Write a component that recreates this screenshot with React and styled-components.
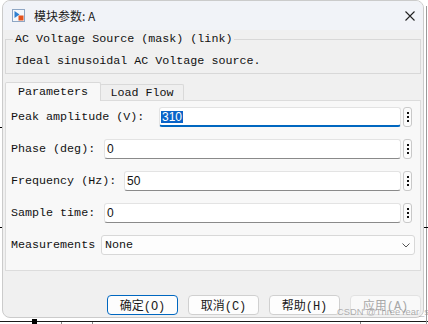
import React from "react";
import styled, { createGlobalStyle } from "styled-components";

const Global = createGlobalStyle`
  html, body { margin: 0; padding: 0; background: #ffffff; }
  body { width: 428px; height: 324px; overflow: hidden; }
`;

const Stage = styled.div`
  position: relative;
  width: 428px;
  height: 324px;
`;

const Canvas = styled.svg`
  position: absolute;
  left: 0;
  top: 0;
`;

const Window = styled.div`
  position: relative;
  margin-left: 2px;
  width: 422px;
  height: 318px;
  box-sizing: border-box;
  border: 1px solid #cbcbcb;
  border-radius: 8px;
  background: #f0f0f0;
  overflow: hidden;
  display: flex;
  flex-direction: column;
  font-family: "Liberation Mono", "Noto Sans CJK SC", monospace;
  font-size: 11.7px;
  color: #111;
`;

const TitleBar = styled.div`
  height: 29px;
  flex-shrink: 0;
  background: #f1f3f8;
  display: flex;
  align-items: center;
  padding: 0 8px 0 9px;
`;

const Title = styled.span`
  margin-left: 9px;
  font-family: "Noto Sans CJK SC", "Noto Sans", sans-serif;
  font-size: 12px;
  color: #1a1a1a;
`;

const Close = styled.svg`
  margin-left: auto;
`;

const Body = styled.div`
  padding: 0 2px;
  display: flex;
  flex-direction: column;
`;

const Group = styled.fieldset`
  margin: 2px 0 0;
  padding: 8px 7px 5px;
  border: 1px solid #d8d8d8;
  min-width: 0;
`;

const Legend = styled.legend`
  padding: 0 2px;
  line-height: 14px;
`;

const Desc = styled.div`
  padding-left: 2px;
  line-height: 14px;
`;

const TabBar = styled.div`
  display: flex;
  align-items: flex-end;
  margin-top: 8px;
  height: 18px;
`;

const Tab = styled.div`
  position: relative;
  z-index: 1;
  box-sizing: border-box;
  width: ${(p) => p.$w}px;
  height: ${(p) => (p.$active ? 19 : 16)}px;
  margin-bottom: ${(p) => (p.$active ? -1 : 0)}px;
  border: 1px solid #d9d9d9;
  border-bottom: none;
  border-radius: 2px 2px 0 0;
  background: ${(p) => (p.$active ? "#f8f8f8" : "#efefef")};
  display: flex;
  align-items: center;
  justify-content: center;
  margin-left: ${(p) => (p.$active ? 0 : -1)}px;
`;

const Panel = styled.div`
  height: 171px;
  box-sizing: border-box;
  border: 1px solid #dcdcdc;
  background: #f8f8f8;
  padding: 6px 5px 0 5px;
  display: flex;
  flex-direction: column;
  gap: 12px;
`;

const Row = styled.div`
  display: flex;
  align-items: center;
  height: 20px;
`;

const Label = styled.span`
  width: ${(p) => p.$w}px;
  flex-shrink: 0;
  white-space: nowrap;
`;

const Input = styled.div`
  flex: 1;
  height: 20px;
  box-sizing: border-box;
  background: #ffffff;
  border: 1px solid #e3e3e3;
  border-bottom: ${(p) => (p.$focus ? "2px solid #0067c0" : "1px solid #8a8a8a")};
  border-radius: 3px;
  padding-left: ${(p) => (p.$focus ? 1 : 2)}px;
  display: flex;
  align-items: center;
  font-family: "Liberation Sans", sans-serif;
  font-size: 12px;
  color: #111;
`;

const Selected = styled.span`
  background: #0a64c8;
  color: #fff;
  line-height: 12px;
  padding: 0 1px;
`;

const Dots = styled.div`
  width: 9px;
  height: 20px;
  box-sizing: border-box;
  margin: 0 3px 0 2px;
  border: 1px solid #c9c9c9;
  border-radius: 3px;
  background: #fbfbfb;
  display: flex;
  flex-direction: column;
  align-items: center;
  justify-content: center;
  gap: 2px;
`;

const Dot = styled.i`
  display: block;
  width: 2px;
  height: 2px;
  background: #111;
`;

const Select = styled.div`
  flex: 1;
  height: 20px;
  box-sizing: border-box;
  border: 1px solid #d8d8d8;
  border-radius: 3px;
  background: #fdfdfd;
  padding: 0 4px 0 3px;
  display: flex;
  align-items: center;
  justify-content: space-between;
`;

const ButtonRow = styled.div`
  display: flex;
  justify-content: flex-end;
  gap: 10px;
  margin-top: 24px;
`;

const Button = styled.div`
  width: 71px;
  height: 20px;
  box-sizing: border-box;
  border: 1px solid ${(p) => (p.$primary ? "#0067c0" : p.$disabled ? "#e2e2e2" : "#d0d0d0")};
  border-radius: 4px;
  background: ${(p) => (p.$disabled ? "#f9f9f9" : "#fdfdfd")};
  color: ${(p) => (p.$disabled ? "#a8a8a8" : "#1a1a1a")};
  display: flex;
  align-items: center;
  justify-content: center;
  font-size: 12px;
`;

const Watermark = styled.div`
  position: absolute;
  left: 337px;
  top: 305px;
  font-family: "Liberation Sans", sans-serif;
  font-size: 9.4px;
  line-height: 13px;
  color: rgba(150, 150, 150, 0.75);
  white-space: nowrap;
`;

function DotsButton() {
  return (
    <Dots>
      <Dot />
      <Dot />
      <Dot />
    </Dots>
  );
}

export default function App() {
  return (
    <Stage>
      <Global />
      <Canvas width="428" height="324">
        <line x1="0" y1="321.5" x2="428" y2="321.5" stroke="#1a1a1a" strokeWidth="1" />
        <rect x="32" y="319" width="5" height="5" fill="#000" />
        <line x1="61.5" y1="322" x2="61.5" y2="324" stroke="#888" />
        <line x1="92.5" y1="322" x2="92.5" y2="324" stroke="#888" />
        <line x1="360.5" y1="322" x2="360.5" y2="324" stroke="#888" />
        <line x1="426.5" y1="6" x2="426.5" y2="324" stroke="#9a9a9a" />
        <line x1="0" y1="127.5" x2="3" y2="127.5" stroke="#000" />
        <line x1="0" y1="227.5" x2="3" y2="227.5" stroke="#000" />
        <line x1="424" y1="227.5" x2="428" y2="227.5" stroke="#000" />
      </Canvas>
      <Window>
        <TitleBar>
          <svg width="13" height="13" viewBox="0 0 13 13">
            <rect x="0.5" y="0.5" width="12" height="12" fill="#f4f7fb" stroke="#8ea6c4" />
            <path d="M2.5 2 L7.5 5.5 L2.5 9 Z" fill="#2f7fd0" />
            <rect x="6.5" y="6.5" width="5" height="5" fill="#e5531d" />
          </svg>
          <Title>模块参数: A</Title>
          <Close width="10" height="10" viewBox="0 0 10 10">
            <path d="M0.5 0.5 L9.5 9.5 M9.5 0.5 L0.5 9.5" stroke="#222" strokeWidth="1.1" />
          </Close>
        </TitleBar>
        <Body>
          <Group>
            <Legend>AC Voltage Source (mask) (link)</Legend>
            <Desc>Ideal sinusoidal AC Voltage source.</Desc>
          </Group>
          <TabBar>
            <Tab $w={96} $active>Parameters</Tab>
            <Tab $w={84}>Load Flow</Tab>
          </TabBar>
          <Panel>
            <Row>
              <Label $w={148}>Peak amplitude (V):</Label>
              <Input $focus>
                <Selected>310</Selected>
              </Input>
              <DotsButton />
            </Row>
            <Row>
              <Label $w={93}>Phase (deg):</Label>
              <Input>0</Input>
              <DotsButton />
            </Row>
            <Row>
              <Label $w={113}>Frequency (Hz):</Label>
              <Input>50</Input>
              <DotsButton />
            </Row>
            <Row>
              <Label $w={93}>Sample time:</Label>
              <Input>0</Input>
              <DotsButton />
            </Row>
            <Row>
              <Label $w={90}>Measurements</Label>
              <Select>
                <span>None</span>
                <svg width="8" height="5" viewBox="0 0 8 5">
                  <path d="M0.5 0.5 L4 4 L7.5 0.5" fill="none" stroke="#555" strokeWidth="1" />
                </svg>
              </Select>
            </Row>
          </Panel>
          <ButtonRow>
            <Button $primary>确定(O)</Button>
            <Button>取消(C)</Button>
            <Button>帮助(H)</Button>
            <Button $disabled>应用(A)</Button>
          </ButtonRow>
        </Body>
      </Window>
      <Watermark>CSDN @ThreeYear_s</Watermark>
    </Stage>
  );
}
